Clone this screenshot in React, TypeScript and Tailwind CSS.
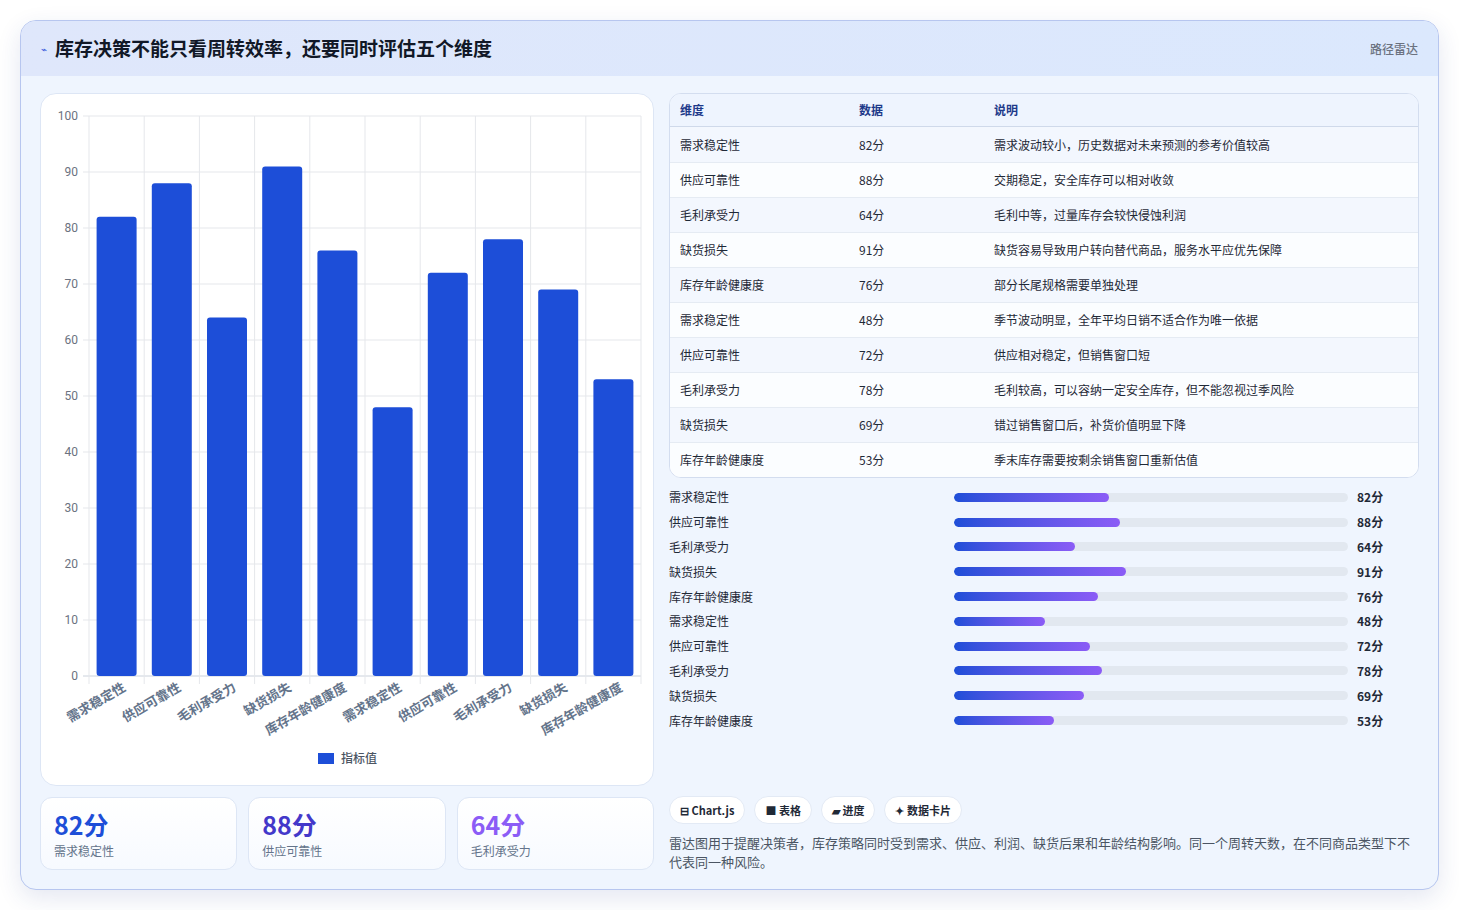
import React from "react";

const rows = [
  ["需求稳定性", 82, "需求波动较小，历史数据对未来预测的参考价值较高"],
  ["供应可靠性", 88, "交期稳定，安全库存可以相对收敛"],
  ["毛利承受力", 64, "毛利中等，过量库存会较快侵蚀利润"],
  ["缺货损失", 91, "缺货容易导致用户转向替代商品，服务水平应优先保障"],
  ["库存年龄健康度", 76, "部分长尾规格需要单独处理"],
  ["需求稳定性", 48, "季节波动明显，全年平均日销不适合作为唯一依据"],
  ["供应可靠性", 72, "供应相对稳定，但销售窗口短"],
  ["毛利承受力", 78, "毛利较高，可以容纳一定安全库存，但不能忽视过季风险"],
  ["缺货损失", 69, "错过销售窗口后，补货价值明显下降"],
  ["库存年龄健康度", 53, "季末库存需要按剩余销售窗口重新估值"],
] as const;

const font = { fontFamily: '"Noto Sans CJK SC", "Noto Sans", sans-serif' };

function Chart() {
  const L = 48, R = 600, T = 22, B = 582;
  const step = (R - L) / 10;
  const y = (v: number) => B - (v / 100) * (B - T);
  return (
    <svg width="613" height="692" className="block" style={font}>
      {Array.from({ length: 11 }).map((_, i) => (
        <g key={"h" + i}>
          <line x1={L - 6} x2={R} y1={y(i * 10)} y2={y(i * 10)} stroke={i === 0 ? "#cbd2dc" : "#e5e7eb"} />
          <text x={L - 11} y={y(i * 10) + 4} textAnchor="end" fontSize="12" fill="#6b7280" fontFamily="Roboto, sans-serif">{i * 10}</text>
        </g>
      ))}
      {Array.from({ length: 11 }).map((_, i) => (
        <line key={"v" + i} x1={L + i * step} x2={L + i * step} y1={T} y2={B + 8} stroke="#e5e7eb" />
      ))}
      {rows.map((r, i) => {
        const cx = L + step * i + step / 2;
        return (
          <g key={i}>
            <rect x={cx - 20} y={y(r[1])} width="40" height={B - y(r[1])} rx="3" fill="#1d4ed8" />
            <text transform={`translate(${cx + 10},${B + 14}) rotate(-30)`} textAnchor="end" fontSize="13" fontWeight="600" fill="#64748b">{r[0]}</text>
          </g>
        );
      })}
      <rect x="277" y="659" width="16" height="11" fill="#1d4ed8" />
      <text x="300" y="669" fontSize="12" fill="#4b5563" fontWeight="500">指标值</text>
    </svg>
  );
}

export default function App() {
  const stats = [
    ["82分", "需求稳定性", "text-[#1d4ed8]"],
    ["88分", "供应可靠性", "text-[#4338ca]"],
    ["64分", "毛利承受力", "text-[#8b5cf6]"],
  ];
  return (
    <div className="w-[1459px] h-[910px] bg-white pt-5 px-5" style={font}>
      <div className="w-[1419px] h-[870px] rounded-2xl border border-[#b7c6ef] bg-[#eff5fe] overflow-hidden shadow-[0_8px_24px_rgba(30,58,138,0.12)] flex flex-col">
        <div className="h-[55px] flex items-center justify-between px-5 bg-gradient-to-r from-[#dfe7fb] to-[#dbe8fd]">
          <div className="flex items-center gap-2">
            <span className="text-[#3b5bdb] text-[10px]">⌁</span>
            <span className="text-[19px] font-bold text-[#111827]">库存决策不能只看周转效率，还要同时评估五个维度</span>
          </div>
          <span className="text-[12px] text-[#6b7280] font-medium">路径雷达</span>
        </div>
        <div className="flex gap-[15px] px-[19px] pt-[17px]">
          <div className="w-[614px] flex flex-col gap-[11px]">
            <div className="h-[693px] bg-white rounded-2xl border border-[#dde6f5]">
              <Chart />
            </div>
            <div className="grid grid-cols-3 gap-[11px]">
              {stats.map((s) => (
                <div key={s[1]} className="h-[73px] rounded-xl border border-[#dde6f5] bg-gradient-to-b from-white to-[#f7faff] px-[13px] pt-[10px]">
                  <div className={`text-[25px] font-bold leading-[32px] ${s[2]}`}>{s[0]}</div>
                  <div className="text-[12px] text-[#64748b] mt-[2px]">{s[1]}</div>
                </div>
              ))}
            </div>
          </div>
          <div className="w-[751px] flex flex-col">
            <div className="rounded-xl border border-[#d3ddef] overflow-hidden bg-white">
              <div className="h-[33px] flex items-center bg-[#eef4fe] border-b border-[#cfd9ea] text-[12px] font-bold text-[#1e3a8a] px-[10px]">
                <div className="w-[179px]">维度</div>
                <div className="w-[135px]">数据</div>
                <div>说明</div>
              </div>
              {rows.map((r, i) => (
                <div key={i} className={`h-[35px] flex items-center text-[12px] text-[#1f2937] px-[10px] ${i > 0 ? "border-t border-[#e5ebf3]" : ""} ${i % 2 === 0 ? "bg-[#f3f7fe]" : "bg-[#fbfdff]"}`}>
                  <div className="w-[179px]">{r[0]}</div>
                  <div className="w-[135px]">{r[1]}分</div>
                  <div>{r[2]}</div>
                </div>
              ))}
            </div>
            <div className="mt-[7px] flex flex-col">
              {rows.map((r, i) => (
                <div key={i} className="h-[24.8px] flex items-center text-[12px]">
                  <div className="w-[285px] text-[#1f2937]">{r[0]}</div>
                  <div className="w-[394px] h-[9px] rounded-full bg-[#e2e8f0] overflow-hidden">
                    <div className="h-full rounded-full bg-gradient-to-r from-[#1d4ed8] to-[#8b5cf6]" style={{ width: `${r[1] * 0.48}%` }} />
                  </div>
                  <div className="ml-[9px] font-bold text-[#1f2937]">{r[1]}分</div>
                </div>
              ))}
            </div>
            <div className="mt-[63px] flex gap-[9px]">
              {["⊟ Chart.js", "■ 表格", "▰ 进度", "✦ 数据卡片"].map((c) => (
                <div key={c} className="h-[28px] px-[10px] flex items-center rounded-full bg-white border border-[#e3eaf5] text-[11px] font-semibold text-[#1f2937]">{c}</div>
              ))}
            </div>
            <p className="mt-[9px] text-[13px] leading-[19px] text-[#4b5563]">雷达图用于提醒决策者，库存策略同时受到需求、供应、利润、缺货后果和年龄结构影响。同一个周转天数，在不同商品类型下不代表同一种风险。</p>
          </div>
        </div>
      </div>
    </div>
  );
}
